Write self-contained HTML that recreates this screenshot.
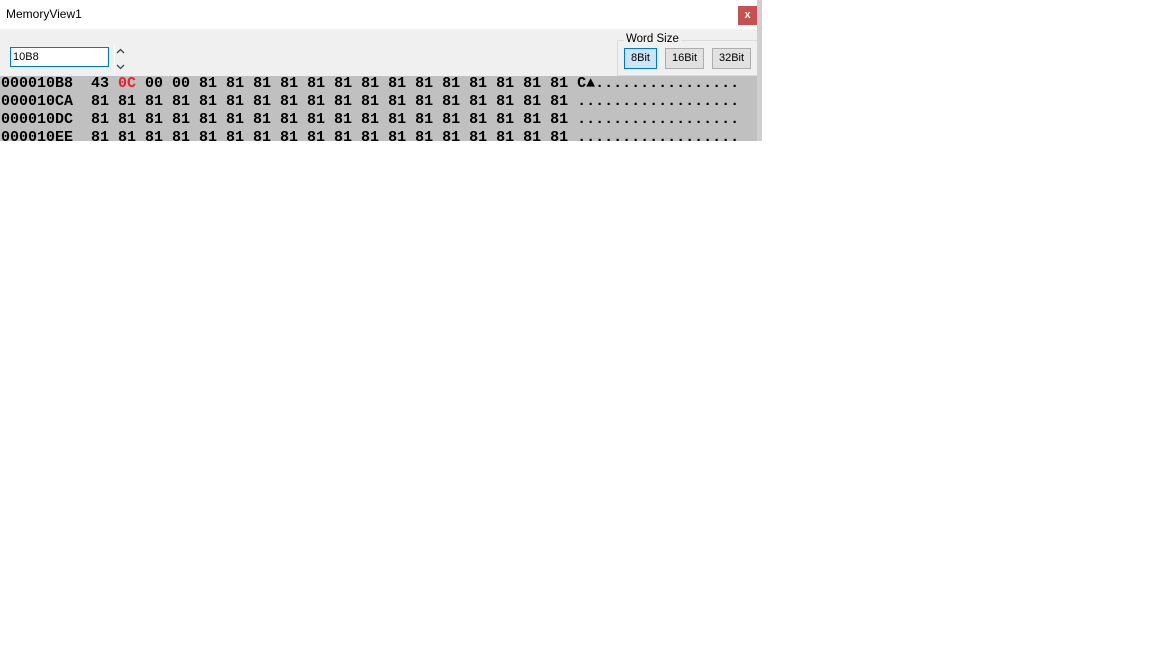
<!DOCTYPE html>
<html><head><meta charset="utf-8"><style>
html,body{margin:0;padding:0;background:#fff;width:1152px;height:648px;overflow:hidden;font-family:"Liberation Sans",sans-serif;}
.win{position:absolute;left:0;top:0;width:758px;height:141px;background:#fff;}
.edge{position:absolute;left:757px;top:0;width:5px;height:141px;background:#cfcfcf;}
.title{position:absolute;left:6px;top:7px;font-size:12px;color:#000;}
.close{position:absolute;left:738px;top:6px;width:19px;height:19px;background:#c75050;color:#fff;font-size:11px;font-weight:bold;text-align:center;line-height:18px;}
.bar{position:absolute;left:0;top:29px;width:757px;height:47px;background:#f0f0f0;}
.inp{position:absolute;left:10px;top:18px;width:95px;height:18px;border:1px solid #0078d7;background:#fff;font-size:11px;line-height:18px;padding-left:2px;}
.spin{position:absolute;left:114px;top:15px;width:1px;height:30px;background:#fff;}
.grp{position:absolute;left:617px;top:11px;width:139px;height:34px;border:1px solid #dcdcdc;}
.grpl{position:absolute;left:624px;top:4px;font-size:11.5px;background:#f0f0f0;padding:0 2px;}
.btn{position:absolute;top:19px;height:19px;border:1px solid #adadad;background:#e1e1e1;font-size:11px;text-align:center;line-height:19px;}
.hex{position:absolute;left:0;top:76px;width:757px;height:65px;background:#c0c0c0;overflow:hidden;}
pre{margin:0;position:absolute;left:1px;top:-1px;font-family:"Liberation Mono",monospace;font-weight:bold;font-size:15px;line-height:18px;color:#000;}
.r{color:#e8202a;}
</style></head><body>
<div class="win">
<div class="title">MemoryView1</div>
<div class="close">x</div>
<div class="bar">
<div class="inp">10B8</div>
<div class="spin"></div>
<svg style="position:absolute;left:116px;top:19px" width="9" height="6"><path d="M1 5 L4.5 1.5 L8 5" stroke="#444" stroke-width="1.3" fill="none"/></svg>
<svg style="position:absolute;left:116px;top:35px" width="9" height="6"><path d="M1 1 L4.5 4.5 L8 1" stroke="#444" stroke-width="1.3" fill="none"/></svg>
<div class="grp"></div>
<div class="grpl">Word Size</div>
<div class="btn" style="left:624px;width:31px;border-color:#0078d7;background:#cce4f7;">8Bit</div>
<div class="btn" style="left:665px;width:37px;">16Bit</div>
<div class="btn" style="left:712px;width:37px;">32Bit</div>
</div>
<div class="hex"><pre>000010B8  43 <span class="r">0C</span> 00 00 81 81 81 81 81 81 81 81 81 81 81 81 81 81 C▲................
000010CA  81 81 81 81 81 81 81 81 81 81 81 81 81 81 81 81 81 81 ..................
000010DC  81 81 81 81 81 81 81 81 81 81 81 81 81 81 81 81 81 81 ..................
000010EE  81 81 81 81 81 81 81 81 81 81 81 81 81 81 81 81 81 81 ..................</pre></div>
</div>
<div class="edge"></div>
</body></html>
